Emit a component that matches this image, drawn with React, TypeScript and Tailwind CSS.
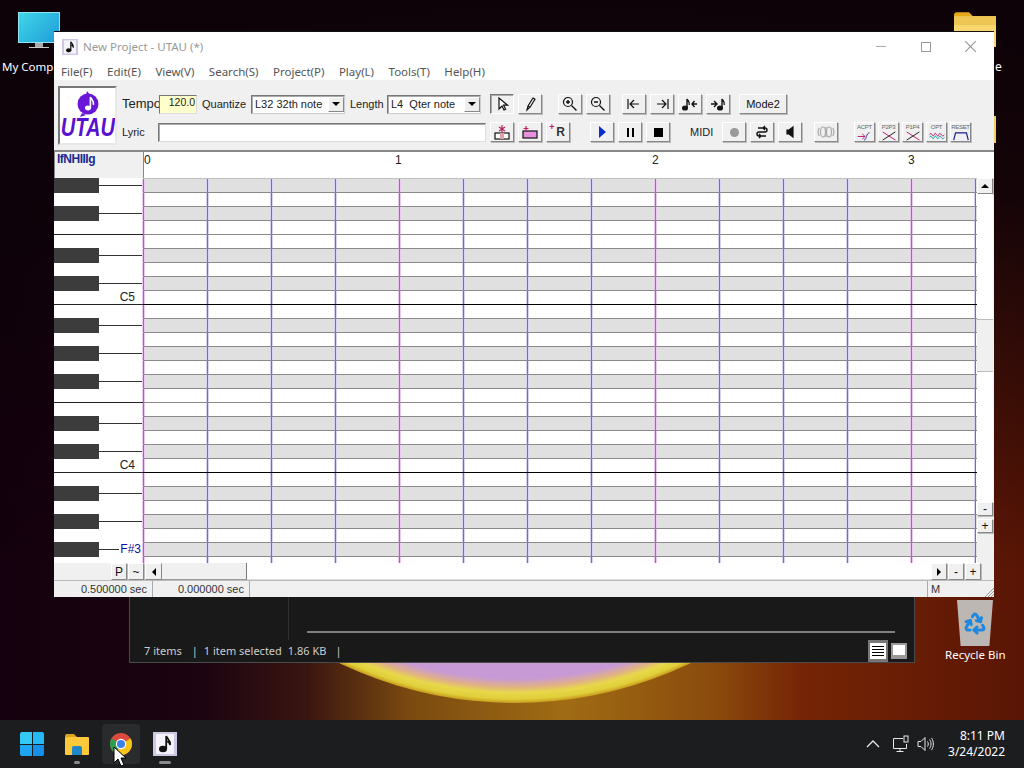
import type { ReactNode } from 'react';
import { Recycle } from 'lucide-react';

const ROW_COUNT = 28;
const SHARP = [0, 2, 5, 7, 10];
const MENU = ['File(F)', 'Edit(E)', 'View(V)', 'Search(S)', 'Project(P)', 'Play(L)', 'Tools(T)', 'Help(H)'];

function Btn({ children, className = 'w-[24px] h-[20px]', pressed = false }: { children?: ReactNode; className?: string; pressed?: boolean }) {
  return (
    <div
      className={
        'flex shrink-0 items-center justify-center border bg-[#f0f0f0] text-[#111] ' +
        (pressed
          ? 'border-t-[#777] border-l-[#777] border-r-white border-b-white shadow-[inset_1px_1px_0_#aaa] '
          : 'border-t-white border-l-white border-r-[#888] border-b-[#888] shadow-[1px_1px_0_#bbb] ') +
        className
      }
    >
      {children}
    </div>
  );
}

function Ico({ children, w = 18, h = 16 }: { children: ReactNode; w?: number; h?: number }) {
  return (
    <svg width={w} height={h} viewBox={`0 0 ${w} ${h}`} fill="none" stroke="#111" strokeWidth="1.2">
      {children}
    </svg>
  );
}

function Combo({ text, className }: { text: string; className: string }) {
  return (
    <div className={'flex h-[19px] items-center border border-t-[#777] border-l-[#777] border-r-[#ccc] border-b-[#ccc] bg-white pl-[3px] text-[#222] shadow-[inset_1px_1px_0_#aaa] ' + className}>
      <span className="flex-1 whitespace-pre">{text}</span>
      <div className="flex h-[15px] w-[16px] items-center justify-center border border-t-white border-l-white border-r-[#888] border-b-[#888] bg-[#eee]">
        <div className="h-0 w-0 border-x-[4px] border-t-[4px] border-x-transparent border-t-black" />
      </div>
    </div>
  );
}

function NoteIcon({ size }: { size: number }) {
  return (
    <svg width={size} height={size} viewBox="0 0 24 24">
      <rect x="0" y="0" width="24" height="24" fill="#cfc6e6" />
      <rect x="3" y="2" width="18" height="20" fill="#f4f2fa" />
      <ellipse cx="10" cy="17" rx="4" ry="3.2" fill="#111" />
      <path d="M13.2 17V4c1 3 4.5 4 4 9-.6-2.5-2-3.5-3-3.5" stroke="#111" strokeWidth="1.8" fill="none" />
    </svg>
  );
}

function Logo() {
  return (
    <div className="flex h-[59px] w-[59px] shrink-0 flex-col items-center overflow-hidden border-2 border-t-[#777] border-l-[#777] border-r-[#e8e8e8] border-b-[#e8e8e8] bg-white">
      <svg width="24" height="27" viewBox="0 0 24 27" className="mt-[3px] shrink-0">
        <circle cx="12" cy="13" r="10.5" fill="#6a16d8" />
        <path d="M11 0l3 4h-4z" fill="#6a16d8" />
        <path d="M6 22l-2 4 6-2z" fill="#6a16d8" />
        <ellipse cx="12" cy="17" rx="3" ry="2.4" fill="#fff" />
        <path d="M14.4 17V6c1 3 4 3.5 3 8" stroke="#fff" strokeWidth="1.6" fill="none" />
      </svg>
      <span className="mt-[-3px] shrink-0 scale-x-[0.8] font-['Liberation_Sans',sans-serif] text-[25px] leading-[25px] font-bold whitespace-nowrap italic text-[#5a10d0]">UTAU</span>
    </div>
  );
}

function Mini({ label, children }: { label: string; children: ReactNode }) {
  return (
    <Btn className="h-[20px] w-[21px] flex-col overflow-hidden">
      <span className="h-[8px] text-[6px] leading-[8px] tracking-[-0.3px] whitespace-nowrap text-[#666]">{label}</span>
      <svg width="18" height="11" viewBox="0 0 18 11" fill="none" strokeWidth="1.1">
        {children}
      </svg>
    </Btn>
  );
}

function Toolbar() {
  return (
    <div className="flex h-[70px] shrink-0 items-center bg-[#f0f0f0] pl-[4px] font-['Liberation_Sans',sans-serif] text-[11px] text-[#222]">
      <Logo />
      <div className="mt-[6px] ml-[5px] flex flex-col gap-[8px]">
        {/* row 1 */}
        <div className="flex h-[20px] items-center">
          <div className="w-[37px] overflow-hidden text-[13px] whitespace-nowrap">Tempo</div>
          <div className="flex h-[19px] w-[38px] items-start justify-end border border-t-[#777] border-l-[#777] border-r-[#ddd] border-b-[#ddd] bg-[#ffffcc] pr-[1px] text-[10.5px] leading-[13px]">120.0</div>
          <span className="ml-[5px] w-[49px]">Quantize</span>
          <Combo text="L32 32th note" className="w-[94px]" />
          <span className="ml-[5px] w-[37px]">Length</span>
          <Combo text="L4  Qter note" className="w-[94px]" />
          <div className="ml-[9px] flex gap-[4px]">
            <Btn pressed>
              <Ico><path d="M6 2v11l3-3 2 4 1.6-.8-2-4h4z" fill="#fff" /></Ico>
            </Btn>
            <Btn>
              <Ico><path d="M6 14l1-4 5-8 2 1.2-5 8zM7 10l2 1.2" /></Ico>
            </Btn>
          </div>
          <div className="ml-[16px] flex gap-[4px]">
            <Btn>
              <Ico><circle cx="7" cy="6" r="4.5" /><path d="M10.5 9.5l5 5M5 6h4M7 4v4" strokeWidth="1.4" /></Ico>
            </Btn>
            <Btn>
              <Ico><circle cx="7" cy="6" r="4.5" /><path d="M10.5 9.5l5 5M5 6h4" strokeWidth="1.4" /></Ico>
            </Btn>
          </div>
          <div className="ml-[12px] flex gap-[4px]">
            <Btn><Ico><path d="M3 3v10M14 8H5M9 4L5 8l4 4" /></Ico></Btn>
            <Btn><Ico><path d="M15 3v10M4 8h9M9 4l4 4-4 4" /></Ico></Btn>
            <Btn>
              <Ico>
                <ellipse cx="4" cy="12" rx="2.4" ry="2" fill="#111" />
                <path d="M6 12V3c1 2 3 2.5 2.2 6M16 8h-5M13.5 5L11 8l2.5 3" strokeWidth="1.4" />
              </Ico>
            </Btn>
            <Btn>
              <Ico>
                <ellipse cx="11" cy="12" rx="2.4" ry="2" fill="#111" />
                <path d="M13 12V3c1 2 3 2.5 2.2 6M2 8h5M5 5l3 3-3 3" strokeWidth="1.4" />
              </Ico>
            </Btn>
          </div>
          <Btn className="ml-[9px] h-[20px] w-[48px]">Mode2</Btn>
        </div>
        {/* row 2 */}
        <div className="flex h-[20px] items-center">
          <span className="w-[36px]">Lyric</span>
          <div className="h-[19px] w-[328px] border border-t-[#777] border-l-[#777] border-r-[#ddd] border-b-[#ddd] bg-white shadow-[inset_1px_1px_0_#aaa]" />
          <div className="ml-[4px] flex gap-[4px]">
            <Btn>
              <Ico><rect x="2" y="9" width="14" height="6" fill="#fff" /><rect x="7" y="9" width="4" height="6" fill="#e0a0a8" stroke="none" /><path d="M9 1v8M6 3l6 4M12 3L6 7" stroke="#b02060" /></Ico>
            </Btn>
            <Btn>
              <Ico><rect x="2" y="7" width="14" height="7" fill="#e890e0" /><path d="M5 2v5M2.5 4.5h5" stroke="#c02060" /></Ico>
            </Btn>
            <Btn>
              <div className="relative pl-[5px] text-[12px] leading-none font-bold text-[#333]">
                R
                <span className="absolute top-[-3px] left-[-2px] text-[9px] text-[#c02060]">+</span>
              </div>
            </Btn>
          </div>
          <div className="ml-[20px] flex gap-[4px]">
            <Btn><div className="h-0 w-0 border-y-[6px] border-l-[7px] border-y-transparent border-l-[#0a2fd0]" /></Btn>
            <Btn><div className="h-[9px] w-[7px] border-x-[2px] border-black" /></Btn>
            <Btn><div className="h-[9px] w-[9px] bg-black" /></Btn>
          </div>
          <span className="ml-[20px] w-[32px]">MIDI</span>
          <div className="flex gap-[4px]">
            <Btn><div className="h-[9px] w-[9px] rounded-full bg-[#999]" /></Btn>
            <Btn><Ico><path d="M5 4h7a2 2 0 010 4H6a2 2 0 000 4h7M12 2l-2 2 2 2M6 10l2 2-2 2" strokeWidth="1.4" /></Ico></Btn>
            <Btn><Ico><path d="M6 6h2l4-3v10l-4-3H6z" fill="#111" /></Ico></Btn>
          </div>
          <div className="ml-[12px]">
            <Btn>
              <Ico><g stroke="#aaa"><ellipse cx="6" cy="8" rx="2.5" ry="5" /><ellipse cx="12" cy="8" rx="2.5" ry="5" /><path d="M9 3v10M2 4L1 8l1 4M16 4l1 4-1 4" /></g></Ico>
            </Btn>
          </div>
          <div className="ml-[16px] flex gap-[3px]">
            <Mini label="ACPT"><path d="M1 6h8M6 3l3 3-3 3" stroke="#c02070" /><path d="M8 10c3 0 2-8 6-8" stroke="#2040a0" /></Mini>
            <Mini label="P2P3"><path d="M2 1l14 9" stroke="#c02070" /><path d="M16 1L2 10" stroke="#222" /></Mini>
            <Mini label="P1P4"><path d="M2 1l14 9" stroke="#c02070" /><path d="M16 1L2 10" stroke="#222" /></Mini>
            <Mini label="OPT"><path d="M1 4c2-5 3 5 5 0s3 5 5 0 3 5 6 0" stroke="#c02070" /><path d="M1 7c2-5 3 5 5 0s3 5 5 0 3 5 6 0" stroke="#18a0a0" /></Mini>
            <Mini label="RESET"><path d="M1 10l2-8h12l2 8" stroke="#1a1a90" strokeWidth="1.3" /></Mini>
          </div>
        </div>
      </div>
    </div>
  );
}

function RulerRow() {
  return (
    <div className="flex h-[28px] shrink-0 bg-[#f0f0f0] font-['Liberation_Sans',sans-serif]">
      <div className="h-full w-[89px] border-t-2 border-l border-[#888] pl-[2px] text-[12px] leading-[15px] font-bold tracking-[-0.5px] text-[#1a2a90]">IfNHIIIg</div>
      <div className="flex h-full w-[851px] border-t-2 border-l border-[#888] bg-white text-[12px] leading-[17px] text-[#222]">
        <span className="w-[251px]">0</span>
        <span className="w-[257px]">1</span>
        <span className="w-[256px]">2</span>
        <span>3</span>
      </div>
    </div>
  );
}

function KeyRow({ i }: { i: number }) {
  const sharp = SHARP.includes(i % 12);
  const line = i % 12 === 4 || i % 12 === 9;
  const label = i === 8 ? 'C5' : i === 20 ? 'C4' : '';
  return (
    <div className={'flex h-[14px] shrink-0 ' + (line ? 'border-t border-[#222]' : '')}>
      {sharp && (
        <>
          <div className="h-[15px] w-[45px] shrink-0 bg-[#3c3c3c]" />
          <div className="mt-[7px] h-px flex-1 bg-[#333]" />
          {i === 26 && <span className="mt-[1px] pr-[2px] pl-px text-[12px] leading-[13px] text-[#1010a0]">F#3</span>}
        </>
      )}
      {label && <span className="mt-px ml-auto pr-[8px] text-[12px] leading-[13px] text-[#222]">{label}</span>}
    </div>
  );
}

function GridRow({ i }: { i: number }) {
  const sharp = SHARP.includes(i % 12);
  const cLine = i % 12 === 8;
  return (
    <div className={'flex h-[14px] shrink-0 border-b ' + (cLine ? 'border-black ' : 'border-[#8a8a8a] ') + (sharp ? 'bg-[#e0e0e0]' : 'bg-white')}>
      {Array.from({ length: 13 }, (_, c) => (
        <div key={c} className="h-full w-[64px] shrink-0">
          <div
            className={
              'h-full w-px ' +
              (c % 4 === 0
                ? 'bg-[#c050d0] shadow-[1px_0_0_#ecc8f2,-1px_0_0_#ecc8f2]'
                : 'bg-[#6c6cd8] shadow-[1px_0_0_#d4d4f4,-1px_0_0_#d4d4f4]')
            }
          />
        </div>
      ))}
      <div className="h-full w-px bg-[#6c6cd8] shadow-[-1px_0_0_#d4d4f4]" />
    </div>
  );
}

function VScroll() {
  return (
    <div className="flex w-[16px] shrink-0 flex-col bg-[#f0f0f0] text-[12px] text-[#111]">
      <Btn className="h-[16px] w-[16px]">
        <div className="h-0 w-0 border-x-[4px] border-b-[4px] border-x-transparent border-b-black" />
      </Btn>
      <div className="h-[125px] bg-white" />
      <div className="h-[53px] border-y border-[#bbb] bg-[#f0f0f0]" />
      <div className="h-[130px] bg-white" />
      <Btn className="h-[14px] w-[16px] leading-none">-</Btn>
      <div className="h-[3px]" />
      <Btn className="h-[14px] w-[16px] leading-none">+</Btn>
    </div>
  );
}

function BottomBar() {
  return (
    <div className="flex h-[17px] shrink-0 items-stretch bg-[#f0f0f0] pl-[57px] font-['Liberation_Sans',sans-serif] text-[12px] text-[#111]">
      <Btn className="w-[16px]">P</Btn>
      <Btn className="ml-px w-[16px]">~</Btn>
      <Btn className="ml-px w-[17px]">
        <div className="h-0 w-0 border-y-[4px] border-r-[4px] border-y-transparent border-r-black" />
      </Btn>
      <div className="w-[85px] border-r border-b border-r-[#777] border-b-[#999] bg-[#f0f0f0]" />
      <div className="w-[684px] border-b border-[#ddd] bg-white" />
      <Btn className="w-[16px]">
        <div className="h-0 w-0 border-y-[4px] border-l-[4px] border-y-transparent border-l-black" />
      </Btn>
      <Btn className="ml-px w-[16px]">-</Btn>
      <Btn className="ml-px w-[16px]">+</Btn>
    </div>
  );
}

function StatusBar() {
  return (
    <div className="flex h-[17px] shrink-0 border-t border-[#bbb] bg-[#f0f0f0] font-['Liberation_Sans',sans-serif] text-[11px] leading-[16px] text-[#333]">
      <div className="w-[99px] border-r border-[#aaa] pr-[5px] text-right">0.500000 sec</div>
      <div className="w-[97px] border-r border-[#aaa] pr-[5px] text-right">0.000000 sec</div>
      <div className="w-[678px] border-r border-[#aaa]" />
      <div className="pl-[3px]">M</div>
      <svg width="9" height="9" viewBox="0 0 9 9" className="mt-auto ml-auto" stroke="#999">
        <path d="M0 9l9-9M3 9l6-6M6 9l3-3" />
      </svg>
    </div>
  );
}

function UtauWindow() {
  return (
    <div className="absolute top-[32px] left-[54px] flex h-[565px] w-[940px] flex-col overflow-hidden bg-white font-['Noto_Sans',sans-serif] shadow-[0_-1px_0_#111]">
      {/* title bar */}
      <div className="flex h-[28px] shrink-0 items-center pt-[1px] pl-[8px] text-[11.5px] text-[#999]">
        <NoteIcon size={16} />
        <span className="ml-[5px]">New Project - UTAU (*)</span>
        <div className="ml-auto flex items-center">
          <div className="flex w-[45px] justify-center"><div className="h-px w-[10px] bg-[#aaa]" /></div>
          <div className="flex w-[45px] justify-center"><div className="h-[10px] w-[10px] border border-[#999]" /></div>
          <div className="flex w-[45px] justify-center">
            <svg width="11" height="11" viewBox="0 0 11 11" stroke="#999" strokeWidth="1.2"><path d="M0 0l11 11M11 0L0 11" /></svg>
          </div>
          <div className="w-[1px]" />
        </div>
      </div>
      {/* menu */}
      <nav className="flex h-[20px] shrink-0 items-center gap-[14.5px] pt-[4px] pl-[7px] text-[11.5px] leading-none text-[#555]">
        {MENU.map((m) => (
          <span key={m}>{m}</span>
        ))}
      </nav>
      <Toolbar />
      <RulerRow />
      {/* piano roll */}
      <div className="flex h-[385px] shrink-0 overflow-hidden bg-[#f0f0f0] font-['Liberation_Sans',sans-serif]">
        <div className="flex w-[89px] shrink-0 flex-col bg-white">
          {Array.from({ length: ROW_COUNT }, (_, i) => (
            <KeyRow key={i} i={i} />
          ))}
        </div>
        <div className="flex w-[834px] shrink-0 flex-col border-t border-[#c0c0c0] bg-white">
          {Array.from({ length: ROW_COUNT }, (_, i) => (
            <GridRow key={i} i={i} />
          ))}
        </div>
        <VScroll />
      </div>
      <BottomBar />
      <StatusBar />
    </div>
  );
}

function ExplorerBehind() {
  return (
    <div className="absolute top-[580px] left-[129px] flex h-[83px] w-[786px] flex-col border border-[#4a4a4a] bg-[#191919] font-['Noto_Sans',sans-serif] text-[11px] text-[#ccc]">
      <div className="flex h-[59px] shrink-0">
        <div className="h-full w-[159px] border-r border-[#2e2e2e]" />
        <div className="mt-[50px] ml-[18px] h-[2px] w-[588px] bg-[#808080]" />
      </div>
      <div className="flex flex-1 items-center pl-[14px]">
        <span>7 items</span>
        <span className="ml-[10px]">|</span>
        <span className="ml-[6px]">1 item selected</span>
        <span className="ml-[6px]">1.86 KB</span>
        <span className="ml-[9px]">|</span>
        <div className="mr-[7px] ml-auto flex h-[22px] items-center gap-[3px]">
          <div className="flex h-[22px] w-[20px] flex-col items-center justify-center gap-[2px] bg-[#777]">
            <div className="flex h-[16px] w-[16px] flex-col justify-center gap-[2px] bg-white px-[2px]">
              <div className="h-px bg-black" />
              <div className="h-px bg-black" />
              <div className="h-px bg-black" />
              <div className="h-px bg-black" />
            </div>
          </div>
          <div className="h-[16px] w-[16px] border-2 border-b-[4px] border-[#999] bg-white" />
        </div>
      </div>
    </div>
  );
}

function Folder({ className, size = 42 }: { className: string; size?: number }) {
  return (
    <svg width={size} height={size * 0.84} viewBox="0 0 42 35" className={className}>
      <path d="M0 3a3 3 0 013-3h12l4 4H0z" fill="#e6a917" />
      <rect x="0" y="4" width="42" height="31" rx="1" fill="#f9d76e" />
      <rect x="0" y="4" width="42" height="9" fill="#eec653" />
    </svg>
  );
}

function DesktopIcons() {
  return (
    <>
      <div className="absolute top-[12px] left-[18px] flex flex-col items-center">
        <div className="h-[31px] w-[42px] border border-[#8fe3f2] bg-[linear-gradient(135deg,#3fd6e8,#1f9cd8)]" />
        <div className="h-[4px] w-[8px] bg-[#aaa]" />
        <div className="h-px w-[20px] bg-[#ccc]" />
      </div>
      <div className="absolute top-[58px] left-[2px] font-['Noto_Sans',sans-serif] text-[11.5px] whitespace-nowrap text-white">My Comp</div>
      <Folder className="absolute top-[12px] left-[954px]" />
      <div className="absolute top-[58px] left-[995px] font-['Noto_Sans',sans-serif] text-[12px] text-white">e</div>
      <div className="absolute top-[116px] left-[960px] h-[27px] w-[36px] bg-[#f0cf62]" />
      {/* recycle bin */}
      <div className="absolute top-[600px] left-[957px] flex h-[46px] w-[36px] items-center justify-center bg-[#bdb7b4] [clip-path:polygon(0_0,100%_0,90%_100%,10%_100%)]">
        <Recycle size={24} strokeWidth={3} className="text-[#1e88e0]" />
      </div>
      <div className="absolute top-[646px] left-[945px] font-['Noto_Sans',sans-serif] text-[11.5px] whitespace-nowrap text-white">Recycle Bin</div>
    </>
  );
}

function Taskbar() {
  return (
    <div className="absolute right-0 bottom-0 left-0 flex h-[48px] items-center bg-[#1c1d1f] font-['Noto_Sans',sans-serif] text-white">
      {/* start */}
      <div className="ml-[20px] grid h-[24px] w-[24px] grid-cols-2 gap-px">
        <div className="rounded-tl-[2px] bg-[#35c9f5]" />
        <div className="rounded-tr-[2px] bg-[#25b9f5]" />
        <div className="rounded-bl-[2px] bg-[#1ea7f0]" />
        <div className="rounded-br-[2px] bg-[#1690ea]" />
      </div>
      {/* explorer */}
      <div className="relative ml-[21px] flex h-[40px] w-[24px] items-center">
        <svg width="24" height="21" viewBox="0 0 24 21">
          <path d="M0 2a2 2 0 012-2h7l3 3H0z" fill="#d9a520" />
          <rect x="0" y="3" width="24" height="18" rx="1" fill="#fdc93b" />
          <path d="M7 21v-7a2 2 0 012-2h6a2 2 0 012 2v7z" fill="#1f86c8" />
        </svg>
        <div className="absolute bottom-0 left-[9px] h-[3px] w-[6px] rounded-full bg-[#8a8a8a]" />
      </div>
      {/* chrome */}
      <div className="relative ml-[13px] flex h-[40px] w-[38px] items-center justify-center rounded-[4px] bg-[#2a2b2d]">
        <svg width="22" height="22" viewBox="0 0 22 22">
          <circle cx="11" cy="11" r="11" fill="#dd4b3e" />
          <path d="M11 11L1.5 5.5A11 11 0 006 20.8z" fill="#2e9e4f" />
          <path d="M11 11l-5 9.8A11 11 0 0022 11c0-2-.5-4-1.5-5.5z" fill="#f5c518" />
          <circle cx="11" cy="11" r="5.2" fill="#fff" />
          <circle cx="11" cy="11" r="4" fill="#3f7fe8" />
        </svg>
      </div>
      {/* utau */}
      <div className="relative ml-[13px] flex h-[40px] w-[24px] items-center">
        <NoteIcon size={24} />
        <div className="absolute bottom-0 left-[6px] h-[3px] w-[12px] rounded-full bg-[#8a8a8a]" />
      </div>
      {/* tray */}
      <div className="ml-auto flex items-center pr-[19px]">
        <svg width="14" height="8" viewBox="0 0 14 8" fill="none" stroke="#e8e8e8" strokeWidth="1.3"><path d="M1 7l6-6 6 6" /></svg>
        <svg width="18" height="18" viewBox="0 0 18 18" fill="none" stroke="#e8e8e8" className="ml-[12px]">
          <path d="M11 3.5H1.5v10h13V9M8 13.5v2.5M4.5 16.5h7" />
          <rect x="12" y="1" width="4" height="6" />
        </svg>
        <svg width="18" height="16" viewBox="0 0 18 16" fill="none" stroke="#e8e8e8" className="ml-[7px]">
          <path d="M1 5.5h3l4-4v13l-4-4H1zM10.5 5.5c1 1.5 1 3.5 0 5M12.5 3.5c2 2.5 2 6.5 0 9M14.5 2c2.5 3.5 2.5 8.5 0 12" />
        </svg>
        <div className="ml-[13px] flex flex-col items-end text-[12px] leading-[16px]">
          <span>8:11 PM</span>
          <span>3/24/2022</span>
        </div>
      </div>
    </div>
  );
}

export default function App() {
  return (
    <div className="relative h-[768px] w-[1024px] overflow-hidden bg-[linear-gradient(180deg,#0c0208_0%,rgba(12,2,8,0.9)_25%,rgba(12,2,8,0)_75%),linear-gradient(90deg,#14000e_0%,#1c0410_20%,#3a1510_30%,#7a4a10_40%,#a06c14_55%,#8a4a0c_70%,#762505_78%,#5a1505_100%)]">
      {/* sun, only its lower edge shows below the explorer window */}
      <div className="absolute top-[600px] left-[108px] h-[110px] w-[814px] overflow-hidden">
        <div className="mt-[-711px] h-[814px] w-[814px] rounded-full bg-[radial-gradient(closest-side,#c090d0_0%,#c79ad6_94%,#e0b088_96%,#e8d84a_97.5%,#e0cf3a_99%,#c99b1e_100%)]" />
      </div>
      <DesktopIcons />
      <ExplorerBehind />
      <UtauWindow />
      <Taskbar />
      {/* mouse cursor */}
      <svg width="14" height="21" viewBox="0 0 14 21" className="absolute top-[746px] left-[113px]">
        <path d="M1 1v16l4-4 3 7 3-1-3-7h5z" fill="#fff" stroke="#000" />
      </svg>
    </div>
  );
}
